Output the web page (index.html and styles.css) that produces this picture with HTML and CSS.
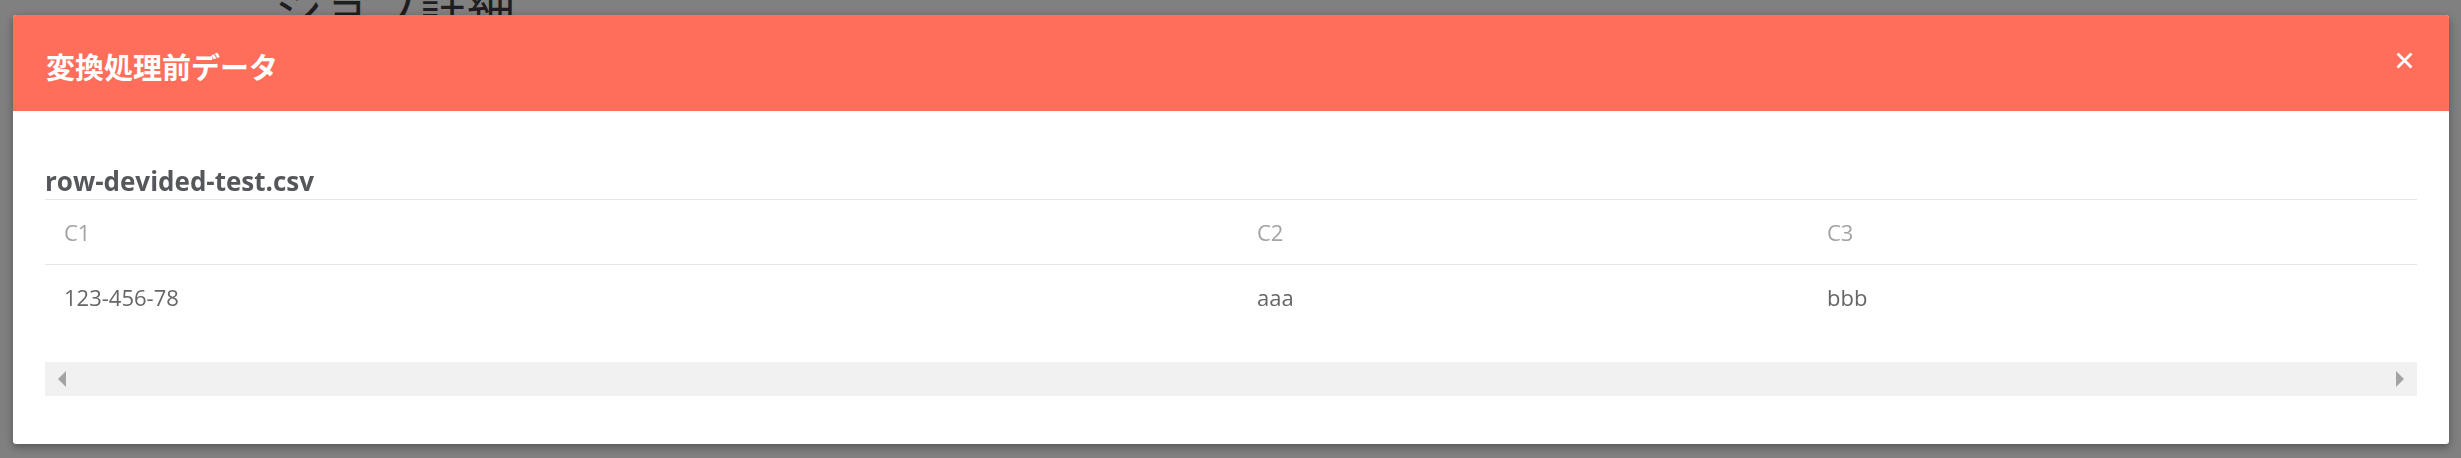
FILE: index.html
```html
<!DOCTYPE html>
<html>
<head>
    <meta charset="utf-8">
    <title>ジョブ詳細</title>
    <link rel="stylesheet" href="styles.css">
</head>
<body>
    <h1 class="page-title">ジョブ詳細</h1>

    <div class="modal">
        <div class="modal-header">
            <div class="modal-title">変換処理前データ</div>
            <svg class="modal-close" width="17" height="17" viewBox="0 0 17 17">
                <path d="M1.5 1.5 L15.5 15.5 M15.5 1.5 L1.5 15.5" stroke="#ffffff" stroke-width="2.8" fill="none"/>
            </svg>
        </div>
        <div class="modal-body">
            <div class="file-name">row-devided-test.csv</div>
            <table class="data-table">
                <colgroup>
                    <col class="col-1">
                    <col class="col-2">
                    <col class="col-3">
                </colgroup>
                <thead>
                    <tr><th>C1</th><th>C2</th><th>C3</th></tr>
                </thead>
                <tbody>
                    <tr><td>123-456-78</td><td>aaa</td><td>bbb</td></tr>
                </tbody>
            </table>
            <div class="scrollbar">
                <span class="arrow-left"></span>
                <span class="arrow-right"></span>
            </div>
        </div>
    </div>
</body>
</html>
```

FILE: styles.css
```css
*{
    padding: 0;
    margin: 0;
    box-sizing: border-box;
}

body
{
    background-color: #808080;
    font-family: "Open Sans", "Noto Sans CJK JP", sans-serif;
    overflow: hidden;
}

.page-title
{
    margin-top: -22px;
    padding-left: 275px;
    font-family: "Noto Sans CJK JP", sans-serif;
    font-size: 48px;
    font-weight: 400;
    line-height: 1.2;
    color: #1e1e1e;
}

.modal
{
    position: fixed;
    left: 13px;
    top: 15px;
    width: 2436px;
    height: 429px;
    background-color: #ffffff;
    border-radius: 3px;
    overflow: hidden;
    box-shadow: 0 3px 9px rgba(0, 0, 0, 0.35);
}

.modal-header
{
    height: 96px;
    background-color: #ff6e5a;
    display: flex;
    justify-content: space-between;
    align-items: flex-start;
    padding: 0 36px 0 33px;
}

.modal-title
{
    margin-top: 37px;
    font-family: "Noto Sans CJK JP", sans-serif;
    font-size: 29px;
    font-weight: 700;
    line-height: 29px;
    color: #ffffff;
}

.modal-close
{
    margin-top: 37px;
}

.modal-body
{
    padding: 52px 32px 0 32px;
}

.file-name
{
    font-size: 26px;
    font-weight: 700;
    line-height: 36px;
    color: #55575b;
}

.data-table
{
    width: 100%;
    border-collapse: collapse;
    table-layout: fixed;
    font-size: 22px;
}

.col-1
{
    width: 1193px;
}

.col-2
{
    width: 570px;
}

.data-table tr
{
    border-top: 1px solid #e6e6e6;
}

.data-table th,
.data-table td
{
    height: 65px;
    padding: 0 19px;
    text-align: left;
    vertical-align: middle;
    white-space: nowrap;
}

.data-table th
{
    font-weight: 400;
    color: #a3a3a3;
}

.data-table td
{
    color: #666666;
}

.scrollbar
{
    margin-top: 32px;
    height: 34px;
    background-color: #f1f1f1;
    display: flex;
    justify-content: space-between;
    align-items: center;
    padding: 0 13px;
}

.arrow-left
{
    width: 0;
    height: 0;
    border-top: 8px solid transparent;
    border-bottom: 8px solid transparent;
    border-right: 8px solid #a3a3a3;
}

.arrow-right
{
    width: 0;
    height: 0;
    border-top: 8px solid transparent;
    border-bottom: 8px solid transparent;
    border-left: 8px solid #a3a3a3;
}
```
